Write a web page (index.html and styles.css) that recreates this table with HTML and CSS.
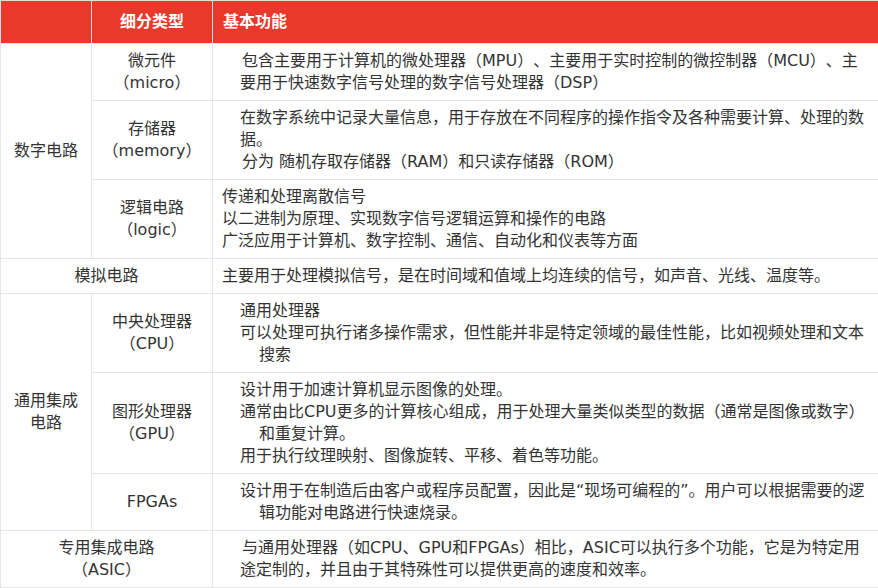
FILE: index.html
```html
<!DOCTYPE html>
<html lang="zh-CN">
<head>
<meta charset="utf-8">
<title>集成电路分类</title>
<link rel="stylesheet" href="styles.css">
</head>
<body>
<table class="tbl">
  <colgroup>
    <col class="c1">
    <col class="c2">
    <col class="c3">
  </colgroup>
  <thead>
    <tr>
      <th class="h-center"></th>
      <th class="h-center">细分类型</th>
      <th class="h-left">基本功能</th>
    </tr>
  </thead>
  <tbody>
    <tr>
      <td class="cat" rowspan="3">数字电路</td>
      <td class="sub">微元件<br>（micro）</td>
      <td class="desc">
        <span class="ln in1 sp">包含主要用于计算机的微处理器（MPU）、主要用于实时控制的微控制器（MCU）、主</span>
        <span class="ln in1">要用于快速数字信号处理的数字信号处理器（DSP）</span>
      </td>
    </tr>
    <tr>
      <td class="sub">存储器<br>（memory）</td>
      <td class="desc">
        <span class="ln in1">在数字系统中记录大量信息，用于存放在不同程序的操作指令及各种需要计算、处理的数</span>
        <span class="ln in1">据。</span>
        <span class="ln in1 sp">分为 随机存取存储器（RAM）和只读存储器（ROM）</span>
      </td>
    </tr>
    <tr>
      <td class="sub">逻辑电路<br>（logic）</td>
      <td class="desc">
        <span class="ln">传递和处理离散信号</span>
        <span class="ln">以二进制为原理、实现数字信号逻辑运算和操作的电路</span>
        <span class="ln">广泛应用于计算机、数字控制、通信、自动化和仪表等方面</span>
      </td>
    </tr>
    <tr>
      <td class="cat" colspan="2">模拟电路</td>
      <td class="desc">
        <span class="ln">主要用于处理模拟信号，是在时间域和值域上均连续的信号，如声音、光线、温度等。</span>
      </td>
    </tr>
    <tr>
      <td class="cat" rowspan="3">通用集成<br>电路</td>
      <td class="sub">中央处理器<br>（CPU）</td>
      <td class="desc">
        <span class="ln in1">通用处理器</span>
        <span class="ln in1">可以处理可执行诸多操作需求，但性能并非是特定领域的最佳性能，比如视频处理和文本</span>
        <span class="ln in2">搜索</span>
      </td>
    </tr>
    <tr>
      <td class="sub">图形处理器<br>（GPU）</td>
      <td class="desc">
        <span class="ln in1">设计用于加速计算机显示图像的处理。</span>
        <span class="ln in1">通常由比CPU更多的计算核心组成，用于处理大量类似类型的数据（通常是图像或数字）</span>
        <span class="ln in2">和重复计算。</span>
        <span class="ln in1">用于执行纹理映射、图像旋转、平移、着色等功能。</span>
      </td>
    </tr>
    <tr>
      <td class="sub">FPGAs</td>
      <td class="desc">
        <span class="ln in1">设计用于在制造后由客户或程序员配置，因此是“现场可编程的”。用户可以根据需要的逻</span>
        <span class="ln in2">辑功能对电路进行快速烧录。</span>
      </td>
    </tr>
    <tr>
      <td class="cat" colspan="2">专用集成电路<br>（ASIC）</td>
      <td class="desc">
        <span class="ln in1 sp">与通用处理器（如CPU、GPU和FPGAs）相比，ASIC可以执行多个功能，它是为特定用</span>
        <span class="ln in1">途定制的，并且由于其特殊性可以提供更高的速度和效率。</span>
      </td>
    </tr>
  </tbody>
</table>
</body>
</html>
```

FILE: styles.css
```css
html, body {
  margin: 0;
  padding: 0;
  background: #ffffff;
}

body {
  font-family: "DejaVu Sans", "Noto Sans CJK SC", sans-serif;
  font-size: 16px;
  color: #333333;
  text-spacing-trim: space-all;
}

.tbl {
  width: 878px;
  border-collapse: collapse;
  table-layout: fixed;
}

.c1 { width: 91px; }
.c2 { width: 121px; }
.c3 { width: 666px; }

.tbl th {
  background: #e8392b;
  color: #ffffff;
  font-weight: bold;
  line-height: 22px;
  height: 22px;
  padding: 10px 10px 10px;
  border: 1px solid #e6dcdb;
  border-bottom: none;
}

.tbl thead tr th:first-child { border-left-color: #e0e0e0; }

.h-center { text-align: center; }
.h-left { text-align: left; padding-left: 20px; }

.tbl td {
  border: 1px solid #e6e6e6;
  line-height: 22px;
  padding: 6px 10px;
  vertical-align: middle;
}

.tbl td.cat,
.tbl td.sub {
  text-align: center;
}

.tbl td.desc {
  text-align: left;
  padding: 6px 10px 6px 9px;
}

.ln {
  display: block;
  white-space: nowrap;
}

.in1 { padding-left: 18px; }
.in2 { padding-left: 37px; }
.sp { padding-left: 20px; }
```
